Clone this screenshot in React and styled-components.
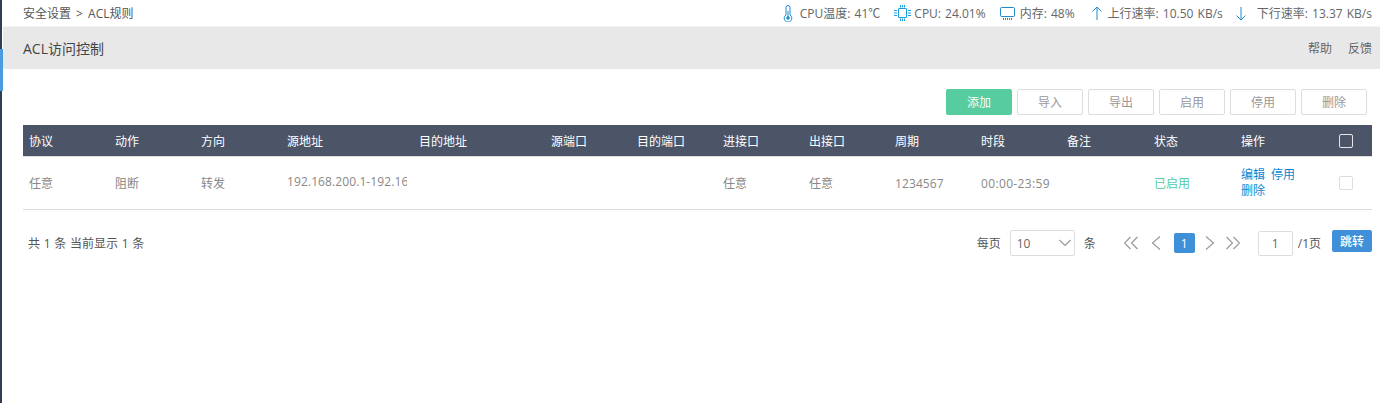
import React from "react";
import styled, { createGlobalStyle } from "styled-components";

const Global = createGlobalStyle`
  html, body { margin: 0; padding: 0; background: #fff; overflow: hidden; }
  body { font-family: "Open Sans", "Noto Sans CJK SC", sans-serif; font-size: 12px; color: #666; }
`;

const Page = styled.div`display: flex; width: 1380px; height: 403px;`;
const Rail = styled.div`width: 3px; flex: none; display: flex; flex-direction: column;`;
const RailPart = styled.div`
  width: ${p => (p.$active ? 3 : 2)}px;
  height: ${p => (p.$h ? `${p.$h}px` : "auto")};
  flex: ${p => (p.$h ? "none" : 1)};
  background: ${p => (p.$active ? "#4a9be0" : "#2f3e50")};
`;
const Main = styled.div`flex: 1; min-width: 0;`;

const TopBar = styled.div`
  height: 27px; display: flex; align-items: center; justify-content: space-between;
  padding: 0 8px 0 20px; box-sizing: border-box; border-bottom: 1px solid #f3f3f3;
`;
const Crumb = styled.div`color: #555; word-spacing: 2px;`;
const Stats = styled.div`display: flex; align-items: center;`;
const Stat = styled.div`
  display: flex; align-items: center; gap: ${p => p.$gap}px; word-spacing: 1px;
  margin-left: ${p => p.$ml || 0}px; color: #666; white-space: nowrap;
`;

const TitleBar = styled.div`
  height: 42px; background: #e8e8e8; display: flex; align-items: center;
  justify-content: space-between; padding: 0 8px 0 20px;
`;
const Title = styled.div`font-size: 14px; color: #444;`;
const TitleLinks = styled.div`display: flex; gap: 16px; color: #666;`;

const Content = styled.div`padding: 20px 8px 0 20px;`;
const Toolbar = styled.div`display: flex; justify-content: flex-end; gap: 5px; padding-right: 5px;`;
const ToolBtn = styled.div`
  width: 66px; height: 26px; box-sizing: border-box; border-radius: 2px; display: flex;
  align-items: center; justify-content: center;
  background: ${p => (p.$primary ? "#57cc9f" : "#fff")};
  color: ${p => (p.$primary ? "#fff" : "#999")};
  border: ${p => (p.$primary ? "none" : "1px solid #ddd")};
`;

const Grid = styled.div`
  display: grid;
  grid-template-columns: repeat(3, 86px) 132px 132px repeat(6, 86px) 87px 87px 86px 1fr;
`;
const Table = styled.div`margin-top: 10px; width: 1349px;`;
const HeadRow = styled(Grid)`height: 31px; background: #4c5468; color: #fff; border-bottom: 1px solid #ddd;`;
const BodyRow = styled(Grid)`height: 52px; border-bottom: 1px solid #ddd; color: #888;`;
const HeadCell = styled.div`display: flex; align-items: center; padding-left: 6px; overflow: hidden; white-space: nowrap;`;
const Cell = styled.div`
  display: flex; align-items: center; padding: 0 0 ${p => (p.$ip ? 3 : 0)}px 6px;
  overflow: hidden; white-space: nowrap; min-width: 0;
  color: ${p => p.$color || "#888"};
  letter-spacing: ${p => p.$spaced || 0}px;
`;
const Clip = styled.div`width: 120px; overflow: hidden; letter-spacing: 0.1px;`;
const CheckCell = styled.div`display: flex; align-items: center; padding-left: 18px;`;
const Box = styled.div`
  width: 14px; height: 14px; border-radius: 2px; box-sizing: border-box;
  border: 1px solid ${p => (p.$light ? "#ddd" : "#e6e6e6")};
`;
const Ops = styled.div`color: #0a87d0; line-height: 16px; white-space: normal; width: 70px;`;
const OpLink = styled.span`display: inline-block; margin-right: 6px;`;

const Pager = styled.div`display: flex; align-items: center; justify-content: space-between; margin-top: 20px; height: 26px; width: 1349px;`;
const Summary = styled.div`padding-left: 5px; color: #555; word-spacing: 0.6px;`;
const PagerRight = styled.div`display: flex; align-items: center;`;
const Label = styled.span`color: #555; margin-left: ${p => p.$ml || 0}px; white-space: nowrap;`;
const SelectBox = styled.div`
  width: 65px; height: 26px; box-sizing: border-box; border: 1px solid #ddd; border-radius: 2px;
  display: flex; align-items: center; justify-content: space-between; padding: 0 3px 0 6px;
  color: #666; margin: 0 0 0 9px;
`;
const PageNum = styled.div`
  width: 21px; height: 20px; margin-left: 13px; background: #3f8fd9; border-radius: 2px; color: #fff;
  display: flex; align-items: center; justify-content: center; font-weight: 500;
`;
const PageInput = styled.div`
  width: 35px; height: 25px; box-sizing: border-box; border: 1px solid #ddd; border-radius: 2px;
  display: flex; align-items: center; justify-content: center; margin-left: 18px; color: #666;
`;
const JumpBtn = styled.div`
  width: 40px; height: 22px; margin-left: 11px; align-self: flex-start; background: #3f8fd9;
  border-radius: 2px; color: #fff; display: flex; align-items: center; justify-content: center; font-weight: 500;
`;
const ChevSvg = styled.svg`flex: none; display: block; margin-left: ${p => p.$ml || 0}px;`;

const Thermo = () => (
  <svg width="10" height="17" viewBox="0 0 10 17" fill="none" stroke="#1b8dd0" strokeWidth="1">
    <path d="M3 2.500a2 2 0 0 1 4 0V10a3.800 3.800 0 1 1-4 0z" />
    <path d="M5 6v7" /><circle cx="5" cy="13" r="1.300" fill="#1b8dd0" />
  </svg>
);
const Chip = () => (
  <svg width="17" height="16" viewBox="0 0 17 16" fill="none" stroke="#1aa0e0" strokeWidth="1">
    <rect x="4.500" y="3.500" width="8" height="9" rx="0.500" />
    <path d="M0 5.500h3M0 8h3M0 10.500h3M14 5.500h3M14 8h3M14 10.500h3M6.500 0v2.500M8.500 0v2.500M10.500 0v2.500M6.500 13.500V16M8.500 13.500V16M10.500 13.500V16" />
  </svg>
);
const Memory = () => (
  <svg width="15" height="13" viewBox="0 0 15 13" fill="none" stroke="#1b8dd0" strokeWidth="1">
    <rect x="0.500" y="0.500" width="14" height="9" rx="1" />
    <path d="M3.500 11v2M5.500 11v2M7.500 11v2M9.500 11v2M11.500 11v2" />
  </svg>
);
const Arrow = ({ down }) => (
  <svg width="10" height="15" viewBox="0 0 10 15" fill="none" stroke="#1b8dd0" strokeWidth="1">
    {down ? <path d="M5 1v13M0.500 9.500L5 14l4.500-4.500" /> : <path d="M5 14V1M0.500 5.500L5 1l4.500 4.500" />}
  </svg>
);
const Chev = ({ d, w = 10, ml, color = "#999" }) => (
  <ChevSvg $ml={ml} width={w} height="14" viewBox={`0 0 ${w} 14`} fill="none" stroke={color} strokeWidth="1.2">
    <path d={d} />
  </ChevSvg>
);

const heads = ["协议", "动作", "方向", "源地址", "目的地址", "源端口", "目的端口", "进接口", "出接口", "周期", "时段", "备注", "状态", "操作"];

export default function App() {
  return (
    <Page>
      <Global />
      <Rail>
        <RailPart $h={49} />
        <RailPart $h={42} $active />
        <RailPart />
      </Rail>
      <Main>
        <TopBar>
          <Crumb>安全设置 &gt; ACL规则</Crumb>
          <Stats>
            <Stat $gap={7}><Thermo />CPU温度: 41℃</Stat>
            <Stat $ml={14} $gap={3}><Chip />CPU: 24.01%</Stat>
            <Stat $ml={14} $gap={5}><Memory />内存: 48%</Stat>
            <Stat $ml={17} $gap={6}><Arrow />上行速率: 10.50 KB/s</Stat>
            <Stat $ml={13} $gap={11}><Arrow down />下行速率: 13.37 KB/s</Stat>
          </Stats>
        </TopBar>
        <TitleBar>
          <Title>ACL访问控制</Title>
          <TitleLinks><span>帮助</span><span>反馈</span></TitleLinks>
        </TitleBar>
        <Content>
          <Toolbar>
            <ToolBtn $primary>添加</ToolBtn>
            <ToolBtn>导入</ToolBtn>
            <ToolBtn>导出</ToolBtn>
            <ToolBtn>启用</ToolBtn>
            <ToolBtn>停用</ToolBtn>
            <ToolBtn>删除</ToolBtn>
          </Toolbar>
          <Table>
            <HeadRow>
              {heads.map(h => <HeadCell key={h}>{h}</HeadCell>)}
              <CheckCell><Box /></CheckCell>
            </HeadRow>
            <BodyRow>
              <Cell>任意</Cell>
              <Cell>阻断</Cell>
              <Cell>转发</Cell>
              <Cell $ip><Clip>192.168.200.1-192.168.200.100</Clip></Cell>
              <Cell /><Cell /><Cell />
              <Cell>任意</Cell>
              <Cell>任意</Cell>
              <Cell $spaced={0.1}>1234567</Cell>
              <Cell $spaced={0.35}>00:00-23:59</Cell>
              <Cell />
              <Cell $color="#57cc9f">已启用</Cell>
              <Cell><Ops><OpLink>编辑</OpLink><OpLink>停用</OpLink><OpLink>删除</OpLink></Ops></Cell>
              <CheckCell><Box $light /></CheckCell>
            </BodyRow>
          </Table>
          <Pager>
            <Summary>共 1 条 当前显示 1 条</Summary>
            <PagerRight>
              <Label>每页</Label>
              <SelectBox>10<Chev w={12} d="M0.500 4l5.500 5.500L11.500 4" /></SelectBox>
              <Label $ml={9}>条</Label>
              <Chev ml={28} w={14} d="M6.500 1L0.500 7l6 6M13.500 1l-6 6 6 6" />
              <Chev ml={13} d="M9 0.500L1.500 7 9 13.500" />
              <PageNum>1</PageNum>
              <Chev ml={10} d="M1 0.500L8.500 7 1 13.500" />
              <Chev ml={11} w={14} d="M0.500 1l6 6-6 6M7.500 1l6 6-6 6" />
              <PageInput>1</PageInput>
              <Label $ml={5}>/1页</Label>
              <JumpBtn>跳转</JumpBtn>
            </PagerRight>
          </Pager>
        </Content>
      </Main>
    </Page>
  );
}
